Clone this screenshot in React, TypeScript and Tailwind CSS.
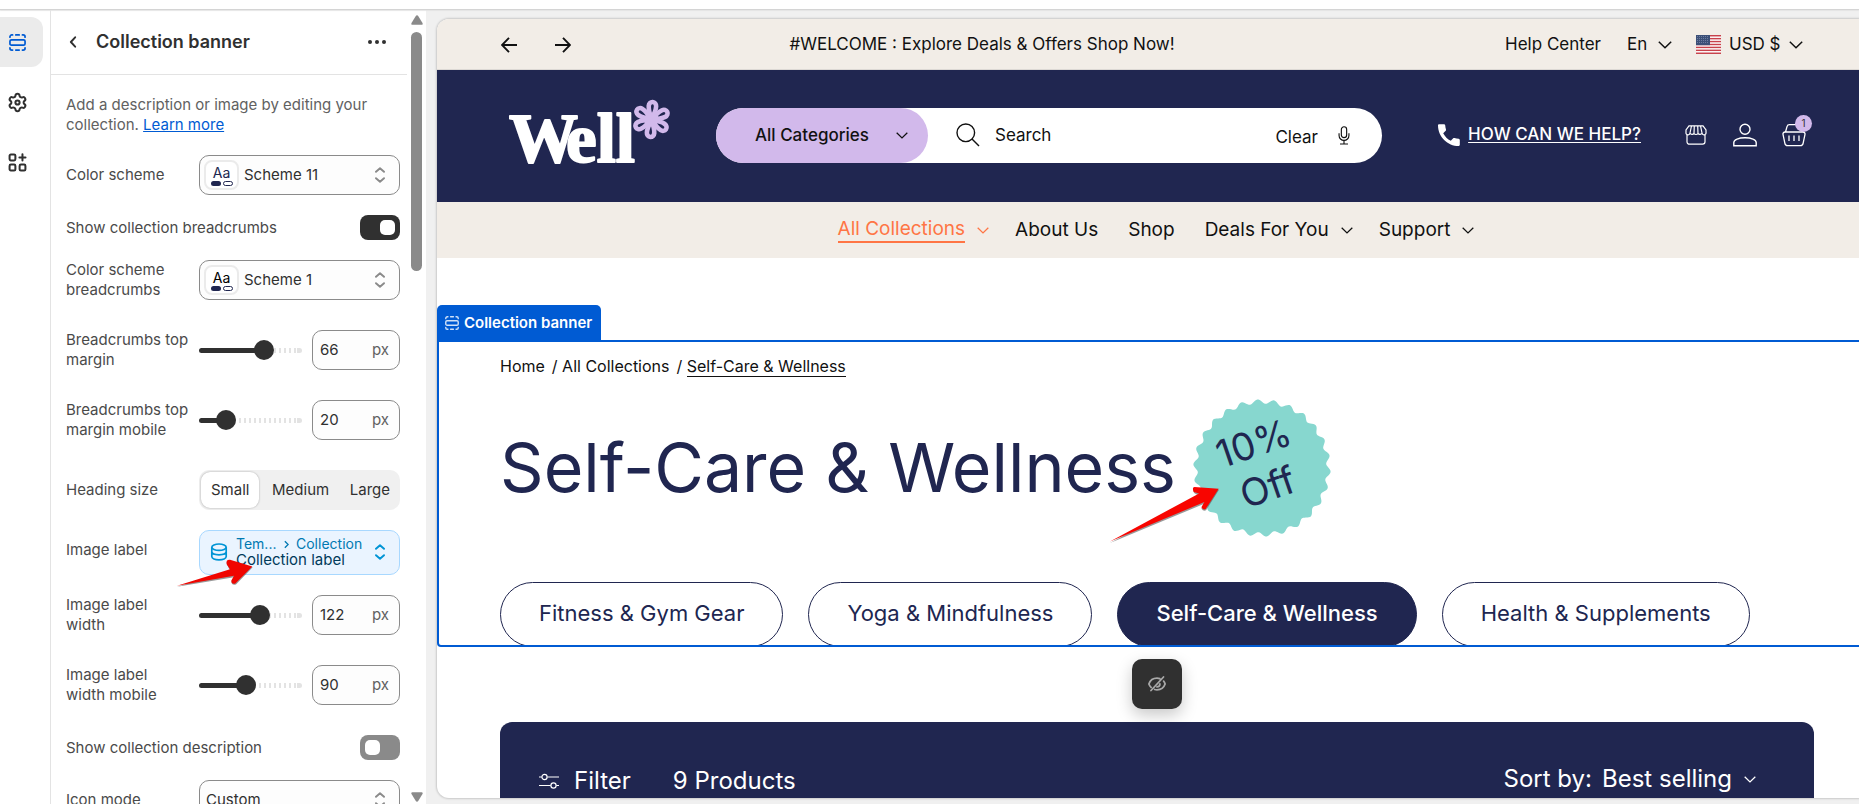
import React, { useId } from "react";

type IconProps = { className?: string };

function SectionIcon({ className }: IconProps) {
  return (
    <svg viewBox="0 0 18 18" className={className} fill="none" stroke="currentColor" strokeWidth="1.8" strokeLinecap="round" strokeLinejoin="round" aria-hidden="true">
      <rect x="1" y="6.2" width="16" height="5.6" rx="1.6" />
      <path d="M1 3.4V3a2 2 0 0 1 2-2h.8M7.2 1h3.6M14.2 1h.8a2 2 0 0 1 2 2v.4M1 14.6v.4a2 2 0 0 0 2 2h.8M7.2 17h3.6M14.2 17h.8a2 2 0 0 0 2-2v-.4" />
    </svg>
  );
}

function GearIcon({ className }: IconProps) {
  return (
    <svg viewBox="0 0 24 24" className={className} fill="none" stroke="currentColor" strokeWidth="2.3" strokeLinejoin="round" aria-hidden="true">
      <path d="M9.671 4.136a2.34 2.34 0 0 1 4.659 0 2.34 2.34 0 0 0 3.319 1.915 2.34 2.34 0 0 1 2.33 4.033 2.34 2.34 0 0 0 0 3.831 2.34 2.34 0 0 1-2.33 4.033 2.34 2.34 0 0 0-3.319 1.915 2.34 2.34 0 0 1-4.659 0 2.34 2.34 0 0 0-3.32-1.915 2.34 2.34 0 0 1-2.33-4.033 2.34 2.34 0 0 0 0-3.831A2.34 2.34 0 0 1 6.35 6.051a2.34 2.34 0 0 0 3.319-1.915" />
      <circle cx="12" cy="12" r="2.4" />
    </svg>
  );
}

function AppsIcon({ className }: IconProps) {
  return (
    <svg viewBox="0 0 18 18" className={className} fill="none" stroke="currentColor" strokeWidth="1.9" strokeLinecap="round" strokeLinejoin="round" aria-hidden="true">
      <rect x="1.5" y="1.5" width="5.5" height="5.5" rx="1.2" />
      <rect x="1.5" y="11" width="5.5" height="5.5" rx="1.2" />
      <rect x="11" y="11" width="5.5" height="5.5" rx="1.2" />
      <path d="M13.7 1.3v5.8M10.8 4.2h5.8" />
    </svg>
  );
}

function Chevron({ className }: IconProps) {
  return (
    <svg viewBox="0 0 14 8" className={className} fill="none" stroke="currentColor" strokeWidth="1.5" aria-hidden="true">
      <path d="M.8.8 7 6.8 13.2.8" />
    </svg>
  );
}

function UpDown({ className }: IconProps) {
  return (
    <svg viewBox="0 0 12 16" className={className} fill="none" stroke="currentColor" strokeWidth="1.9" strokeLinecap="round" strokeLinejoin="round" aria-hidden="true">
      <path d="M2 4.8 6 1.2l4 3.6M2 11.2l4 3.6 4-3.6" />
    </svg>
  );
}

function ArrowRight({ className }: IconProps) {
  return (
    <svg viewBox="0 0 16 16" className={className} fill="none" stroke="currentColor" strokeWidth="1.9" aria-hidden="true">
      <path d="M0 8h15M8 .8 15 8l-7 7.200" />
    </svg>
  );
}

function DatabaseIcon({ className }: IconProps) {
  return (
    <svg viewBox="0 0 18 18" className={className} fill="none" stroke="currentColor" strokeWidth="1.7" aria-hidden="true">
      <ellipse cx="9" cy="4.2" rx="7.2" ry="3.2" />
      <path d="M1.8 4.2v9.4c0 1.9 3.2 3.3 7.2 3.3s7.2-1.4 7.2-3.3V4.2M1.8 8.8c0 1.7 3.2 3 7.2 3s7.2-1.3 7.2-3" />
    </svg>
  );
}

const ROW = "grid grid-cols-[133px_1fr] items-center";

function SchemeRow({ label, value, ink, className }: { label: string; value: string; ink: string; className: string }) {
  const id = useId();
  return (
    <div className={`${ROW} ${className}`}>
      <label htmlFor={id} className="pr-[10px]">{label}</label>
      <div className="relative h-10">
        <select id={id} className="h-10 w-full appearance-none rounded-[10px] border border-[#8a8a8a] bg-[#fdfdfd] pl-11 text-[15px] text-[#303030]">
          <option>{value}</option>
        </select>
        <span className="pointer-events-none absolute top-[5px] left-[5px] flex h-[30px] w-[35px] flex-col items-center justify-center rounded-lg border-2 border-[#ebebeb] bg-white">
          <span className={`text-[14px] leading-[16px] ${ink}`}>Aa</span>
          <span className="flex gap-[2px]">
            <span className="h-[5px] w-[10px] rounded-sm bg-[#202650]" />
            <span className="h-[5px] w-[10px] rounded-sm border border-[#202650]" />
          </span>
        </span>
        <UpDown className="pointer-events-none absolute top-3 right-[14px] h-4 w-3 text-[#8a8a8a]" />
      </div>
    </div>
  );
}

function SliderRow({ label, value, max, className }: { label: string; value: number; max: number; className: string }) {
  const id = useId();
  const fill = Math.round(10 + (83 * value) / max);
  return (
    <div className={`${ROW} ${className}`}>
      <label htmlFor={id} className="pr-[10px]">{label}</label>
      <div className="flex items-center gap-[10px]">
        <input
          id={id}
          type="range"
          min={0}
          max={max}
          defaultValue={value}
          className="h-[5px] w-[103px] appearance-none rounded-full [&::-webkit-slider-thumb]:size-5 [&::-webkit-slider-thumb]:appearance-none [&::-webkit-slider-thumb]:rounded-full [&::-webkit-slider-thumb]:bg-[#303030]"
          style={{
            backgroundImage:
              "linear-gradient(#303030,#303030),linear-gradient(#e3e3e3,#e3e3e3),repeating-linear-gradient(90deg,#e3e3e3 0 2px,transparent 2px 5px)",
            backgroundSize: `${fill}px 100%,5px 100%,100% 100%`,
            backgroundPosition: "left,right,left",
            backgroundRepeat: "no-repeat",
          }}
        />
        <div className="flex h-10 min-w-0 flex-1 items-center justify-between rounded-[10px] border border-[#8a8a8a] bg-[#fdfdfd] pr-[10px] pl-[7px]">
          <input aria-label={`${label} value`} defaultValue={value} className="w-10 bg-transparent text-[15px] text-[#303030] outline-none" />
          <span className="text-[#616161]">px</span>
        </div>
      </div>
    </div>
  );
}

function ToggleRow({ label, on, className }: { label: string; on: boolean; className: string }) {
  const id = useId();
  return (
    <div className={`flex h-[25px] items-center justify-between ${className}`}>
      <label htmlFor={id}>{label}</label>
      <input
        id={id}
        type="checkbox"
        role="switch"
        defaultChecked={on}
        className="flex h-[25px] w-10 appearance-none items-center rounded-lg bg-[#8a8a8a] px-[5px] before:block before:size-[15px] before:rounded-[5px] before:bg-white before:content-[''] checked:justify-end checked:bg-[#303030]"
      />
    </div>
  );
}

function Sidebar() {
  return (
    <aside className="flex w-[375px] shrink-0 bg-white">
      <div className="min-w-0 flex-1 overflow-hidden">
        <header className="flex h-[66px] items-center border-b border-[#e3e3e3] pr-5 pl-[14px] text-[#303030]">
          <button aria-label="Back" className="flex size-5 items-center">
            <svg viewBox="0 0 8 14" className="ml-1 h-3 w-2" fill="none" stroke="currentColor" strokeWidth="2.2" strokeLinecap="round" strokeLinejoin="round"><path d="M6.500 1.500 1.500 7l5 5.500" /></svg>
          </button>
          <h1 className="ml-[11px] flex-1 text-[18px] font-semibold">Collection banner</h1>
          <button aria-label="More actions">
            <svg viewBox="0 0 20 6" className="h-[6px] w-5" fill="currentColor"><circle cx="3" cy="3" r="2" /><circle cx="10" cy="3" r="2" /><circle cx="17" cy="3" r="2" /></svg>
          </button>
        </header>
        <div className="pt-5 pr-[7px] pl-[15px] text-[15px] leading-5 text-[#4a4a4a]">
          <p className="text-[#616161]">
            Add a description or image by editing your collection. <a href="#learn" className="text-[#005bd3] underline">Learn more</a>
          </p>
          <SchemeRow className="mt-5" label="Color scheme" value="Scheme 11" ink="text-[#202650]" />
          <ToggleRow className="mt-5" label="Show collection breadcrumbs" on />
          <SchemeRow className="mt-5" label="Color scheme breadcrumbs" value="Scheme 1" ink="text-black" />
          <SliderRow className="mt-[30px]" label="Breadcrumbs top margin" value={66} max={100} />
          <SliderRow className="mt-[30px]" label="Breadcrumbs top margin mobile" value={20} max={100} />
          <div className={`${ROW} mt-[30px]`} role="radiogroup" aria-label="Heading size">
            <span>Heading size</span>
            <div className="flex h-10 justify-between rounded-[10px] bg-[#f0f0f0] p-[2px] text-[#303030]">
              {["Small", "Medium", "Large"].map((size) => (
                <label key={size} className="flex items-center rounded-[9px] px-2 has-checked:bg-white has-checked:px-[10px] has-checked:shadow-[0_0_2px_rgba(0,0,0,0.35)]">
                  <input type="radio" name="heading-size" defaultChecked={size === "Small"} className="sr-only" />
                  {size}
                </label>
              ))}
            </div>
          </div>
          <div className="mt-5 grid grid-cols-[133px_1fr]">
            <span className="pt-[10px]">Image label</span>
            <div className="relative">
              <button aria-label="Image label source" className="flex h-[45px] w-full items-center rounded-[10px] border border-[#a8d8ff] bg-[#eaf4ff] pr-[13px] pb-px pl-[10px] text-left text-[#00659c]">
                <DatabaseIcon className="mr-2 size-[18px] text-[#0094d5]" />
                <span className="flex-1">
                  <span className="flex items-center text-[14px] leading-4 text-[#0079b2]">
                    <span className="w-12">Tem...</span>
                    <svg viewBox="0 0 6 10" className="mr-[7px] h-[9px] w-[5px]" fill="none" stroke="currentColor" strokeWidth="1.6"><path d="m1 1 4 4-4 4" /></svg>
                    Collection
                  </span>
                  <span className="block text-[15px] leading-4 text-[#003a5a]">Collection label</span>
                </span>
                <UpDown className="h-4 w-3 text-[#0094d5]" />
              </button>
              <svg viewBox="525 85 240 95" className="pointer-events-none absolute top-[28px] -left-6 h-8 w-20 overflow-visible" aria-hidden="true">
                <path d="M531 171 690 122 682 106Q676 92 690 92L758 112 708 164Q695 168 694 156L702 142Z" fill="#555" opacity=".6" />
                <path d="M531 168 690 118 680 103Q677 89 690 90L757 110 706 161Q694 164 694 152L702 138Z" fill="#f00500" />
              </svg>
            </div>
          </div>
          <SliderRow className="mt-5" label="Image label width" value={122} max={200} />
          <SliderRow className="mt-[30px]" label="Image label width mobile" value={90} max={200} />
          <ToggleRow className="mt-[30px]" label="Show collection description" on={false} />
          <div className={`${ROW} mt-5`}>
            <label htmlFor="icon-mode">Icon mode</label>
            <div className="relative h-10">
              <select id="icon-mode" className="h-10 w-full appearance-none rounded-[10px] border border-[#8a8a8a] bg-[#fdfdfd] pl-[6px] text-[15px] text-[#303030]">
                <option>Custom</option>
              </select>
              <UpDown className="pointer-events-none absolute top-3 right-[14px] h-4 w-3 text-[#8a8a8a]" />
            </div>
          </div>
        </div>
      </div>
      <div className="flex w-[19px] flex-col items-center pt-[6px] pb-[2px]" aria-hidden="true">
        <svg viewBox="0 0 12 10" className="h-[10px] w-3" fill="#8a8a8a"><path d="M6 .3c.5 0 .9.2 1.2.6l4.3 7C12 8.8 11.6 9.7 10.7 9.7H1.3C.4 9.7 0 8.8.5 7.9l4.300-7C5.1.5 5.5.3 6 .3z" /></svg>
        <div className="mt-[7px] h-[239px] w-[11px] rounded-full bg-[#8a8a8a]" />
        <div className="flex-1" />
        <svg viewBox="0 0 12 10" className="h-[10px] w-3 rotate-180" fill="#8a8a8a"><path d="M6 .3c.5 0 .9.2 1.2.6l4.3 7C12 8.8 11.6 9.7 10.7 9.7H1.3C.4 9.7 0 8.8.5 7.9l4.300-7C5.1.5 5.5.3 6 .3z" /></svg>
      </div>
    </aside>
  );
}

function Logo() {
  return (
    <svg viewBox="0 0 162 64" className="h-16 w-[162px] overflow-visible" role="img" aria-label="Well">
      <text x="0" y="61" fontFamily="'Liberation Serif', serif" fontWeight="700" fontSize="69" fill="#fff" stroke="#fff" strokeWidth="2" strokeLinejoin="round">W<tspan x="57">ell</tspan></text>
      <g transform="translate(142.500 18.500)" fill="none" stroke="#d2b9eb" strokeWidth="4.600" strokeLinejoin="round">
        {[4, 64, 124, 184, 244, 304].map((a) => (
          <path key={a} transform={`rotate(${a})`} d="M0 -1C-2.500 -6 -3.700 -10 -3.700 -13.500A3.700 4 0 0 1 3.700 -13.500C3.700 -10 2.500 -6 0 -1Z" />
        ))}
      </g>
    </svg>
  );
}

function Flag() {
  return (
    <svg viewBox="0 0 25 19" className="h-[19px] w-[25px]" aria-hidden="true">
      <rect width="25" height="19" fill="#fff" />
      {[0, 1, 2, 3, 4, 5, 6].map((i) => (
        <rect key={i} y={i * 2.92} width="25" height="1.46" fill="#c8414b" />
      ))}
      <rect width="14" height="10.2" fill="#3c5078" />
      {[1.5, 3.5, 5.5, 7.5].map((y) => (
        <path key={y} d={`M1 ${y}h12`} stroke="#8291b4" strokeWidth=".7" strokeDasharray="1 1" />
      ))}
    </svg>
  );
}

function Announcement() {
  return (
    <div className="flex h-[51px] items-center border-b border-[#dcd8d4] bg-[#f2ede7] pt-px pr-14 pl-16 text-[17px] text-[#111]">
      <div className="flex gap-[38px]">
        <button aria-label="Previous"><ArrowRight className="size-4 rotate-180" /></button>
        <button aria-label="Next"><ArrowRight className="size-4" /></button>
      </div>
      <p className="flex-1 pr-28 text-center">#WELCOME : Explore Deals &amp; Offers Shop Now!</p>
      <div className="flex items-center">
        <a href="#help" className="mr-[26px] whitespace-nowrap">Help Center</a>
        <div className="relative mr-6 flex items-center">
          <select aria-label="Language" className="appearance-none pr-6"><option>En</option></select>
          <Chevron className="pointer-events-none absolute right-0 h-2 w-[14px]" />
        </div>
        <Flag />
        <div className="relative ml-2 flex items-center">
          <select aria-label="Currency" className="appearance-none pr-[22px]"><option>USD $</option></select>
          <Chevron className="pointer-events-none absolute right-0 h-2 w-[14px]" />
        </div>
      </div>
    </div>
  );
}

function StoreHeader() {
  return (
    <div className="flex h-[132px] items-center bg-[#202650] pr-[53px] pb-[2px] pl-[72px]">
      <a href="#home" className="-mt-1 mr-[45px]"><Logo /></a>
      <form className="flex h-[55px] w-[666px] items-center rounded-full bg-white text-[17px] text-[#111]">
        <div className="relative flex h-full w-[212px] shrink-0 items-center">
          <select aria-label="Category" className="h-full w-full appearance-none rounded-full bg-[#d2b9eb] pt-[2px] pl-[39px] font-medium">
            <option>All Categories</option>
          </select>
          <Chevron className="pointer-events-none absolute right-5 h-[7px] w-3" />
        </div>
        <svg viewBox="0 0 24 24" className="ml-7 size-6" fill="none" stroke="currentColor" strokeWidth="1.4" aria-hidden="true"><circle cx="9.8" cy="9.8" r="8.8" /><path d="m16 16 7 7" /></svg>
        <input aria-label="Search" placeholder="Search" className="ml-[15px] min-w-0 flex-1 pt-[2px] outline-none placeholder:text-[#111]" />
        <button type="button" className="mr-5 pt-[5px]">Clear</button>
        <button type="button" aria-label="Voice search" className="mr-8">
          <svg viewBox="0 0 12 20" className="h-[19px] w-3" fill="none" stroke="currentColor" strokeWidth="1.2"><rect x="3.2" y=".8" width="5.6" height="11.5" rx="2.8" /><path d="M.8 7.500V10a5.200 5.200 0 0 0 10.400 0V7.500M6 15.200v3.500M1.800 18.900h8.400" /></svg>
        </button>
      </form>
      <div className="ml-auto flex items-center text-white">
        <svg viewBox="0 0 22 22" className="mr-2 size-[22px]" fill="currentColor" aria-hidden="true"><path d="M1.200.2h4.800c.7 0 1.100.4 1.200 1.100.1 1.500.4 2.900.8 4.200.2.500.1.900-.3 1.300L5.200 9.200c1.700 3.300 4.300 5.900 7.600 7.600l2.400-2.500c.4-.4.8-.5 1.300-.3 1.300.4 2.700.7 4.200.8.700.1 1.100.5 1.100 1.200v4.800c0 .7-.4 1.200-1.100 1.200C9.600 22 0 12.500 0 1.400 0 .7.500.2 1.200.2z" /></svg>
        <a href="#contact" className="mr-[44px] text-[17px] font-medium whitespace-nowrap underline underline-offset-2">HOW CAN WE HELP?</a>
        <button aria-label="Store" className="mr-[26px]">
          <svg viewBox="0 0 22 20" className="h-5 w-[22px]" fill="none" stroke="currentColor" strokeWidth="1.2"><path d="M4 .8h14L21 5v2.300a1.900 1.900 0 0 1-4 .9 2.500 2.500 0 0 1-4 .3 2.500 2.500 0 0 1-4 0 2.500 2.500 0 0 1-4-.3 1.900 1.900 0 0 1-4-.9V5zM6.500.8 5 8M9.300.8 9 8.500M12.700.8l.3 7.700M15.500.8 17 8M2 9.500v7.300A2.400 2.400 0 0 0 4.400 19.200h13.200a2.400 2.400 0 0 0 2.400-2.400V9.500" /></svg>
        </button>
        <button aria-label="Account" className="mr-[25px]">
          <svg viewBox="0 0 24 24" className="size-6" fill="none" stroke="currentColor" strokeWidth="1.4"><circle cx="12" cy="6.3" r="5" /><path d="M.8 22.800v-3.200c0-3 5-4.800 11.200-4.800s11.200 1.800 11.200 4.800v3.200z" /></svg>
        </button>
        <button aria-label="Cart, 1 item" className="relative">
          <svg viewBox="0 0 24 24" className="size-6" fill="none" stroke="currentColor" strokeWidth="1.3"><path d="M3.500 9 5 3.600A2.600 2.600 0 0 1 7.500 1.700h9A2.600 2.600 0 0 1 19 3.600L20.500 9M3 9h18a2 2 0 0 1 2 2.400l-1.900 9a2.800 2.800 0 0 1-2.700 2.300H5.600a2.800 2.800 0 0 1-2.700-2.300l-1.900-9A2 2 0 0 1 3 9zM7 12.500v5.500M12 12.500v5.500M17 12.500v5.500" /></svg>
          <span className="absolute -top-2 -right-[6px] flex size-[17px] items-center justify-center rounded-full bg-[#d2b9eb] text-[10px] text-[#333]">1</span>
        </button>
      </div>
    </div>
  );
}

function NavBar() {
  return (
    <nav className="flex h-14 items-center justify-center bg-[#f2ede7] pl-4 text-[19px] text-[#111]">
      <button className="mr-[26px] flex items-center gap-3 text-[#ff7545]">
        <span className="border-b-2 border-[#ff7545] leading-6">All Collections</span>
        <Chevron className="h-[7px] w-3" />
      </button>
      <a href="#about" className="mr-[30px]">About Us</a>
      <a href="#shop" className="mr-[30px]">Shop</a>
      <button className="mr-[26px] flex items-center gap-3">Deals For You <Chevron className="h-[7px] w-3" /></button>
      <button className="flex items-center gap-3">Support <Chevron className="h-[7px] w-3" /></button>
    </nav>
  );
}

function sealPath(points: number, radius: number, depth: number): string {
  const steps = 364;
  const out: string[] = [];
  for (let i = 0; i < steps; i++) {
    const a = (i / steps) * Math.PI * 2;
    const r = radius + depth * Math.cos(points * (a + 0.065));
    out.push(`${(70 + r * Math.sin(a)).toFixed(2)} ${(70 - r * Math.cos(a)).toFixed(2)}`);
  }
  return `M${out.join("L")}Z`;
}

function DiscountSeal() {
  return (
    <svg viewBox="0 0 140 140" className="size-[140px] shrink-0" role="img" aria-label="10% Off">
      <path d={sealPath(26, 66.5, 2.2)} fill="#87d7cf" />
      <g fontFamily="Inter, sans-serif" fontSize="38" fill="#202650" textAnchor="middle">
        <text transform="translate(66 58) rotate(-19)">10%</text>
        <text transform="translate(80 102) rotate(-19)">Off</text>
      </g>
    </svg>
  );
}

const COLLECTIONS = ["Fitness & Gym Gear", "Yoga & Mindfulness", "Self-Care & Wellness", "Health & Supplements"];

function CollectionBanner() {
  return (
    <section className="mt-[47px]">
      <div className="flex h-9 w-[164px] items-center gap-[5px] rounded-t-[5px] bg-[#005bd3] pl-2 text-[15px] font-semibold whitespace-nowrap text-white">
        <SectionIcon className="size-[14px] shrink-0 text-[#d0e2f8]" />
        Collection banner
      </div>
      <div className="relative -mt-px h-[307px] overflow-hidden pt-4 pr-[45px] pl-[63px]">
        <div className="pointer-events-none absolute inset-y-0 left-0 -right-1 z-10 rounded-bl-sm border-2 border-[#005bd3]" />
        <nav className="flex h-5 gap-[7px] text-base leading-5 text-[#111]" aria-label="Breadcrumb">
          <a href="#home">Home</a>
          <span>/ <a href="#collections">All Collections</a></span>
          <span>/ <a href="#self-care" className="border-b border-[#111]">Self-Care &amp; Wellness</a></span>
        </nav>
        <div className="mt-[22px] flex h-[140px] items-center gap-4">
          <h2 className="pb-[2px] text-[68px] leading-none whitespace-nowrap text-[#202650]">Self-Care &amp; Wellness</h2>
          <div className="relative">
            <DiscountSeal />
            <svg viewBox="90 345 340 180" className="pointer-events-none absolute top-[87px] -left-[84px] h-[60px] w-[113px] overflow-visible" aria-hidden="true">
              <path d="M96 519 362 376 349 369Q343 354 351 353L424 359 385 421Q377 425 371 416L378 402Z" fill="#555" opacity=".6" />
              <path d="M96 515 364 370 348 366Q342 351 350 351L423 356 384 417Q376 421 371 412L380 396Z" fill="#f80500" />
            </svg>
          </div>
        </div>
        <div className="mt-[44px] flex gap-[25px]">
          {COLLECTIONS.map((name) =>
            name === "Self-Care & Wellness" ? (
              <a key={name} href="#collection" aria-current="page" className="flex h-[65px] items-center rounded-full border border-[#202650] bg-[#202650] px-[38px] pb-[2px] text-[22px] font-medium whitespace-nowrap text-white">{name}</a>
            ) : (
              <a key={name} href="#collection" className="flex h-[65px] items-center rounded-full border border-[#202650] px-[38px] pb-[2px] text-[22px] whitespace-nowrap text-[#202650]">{name}</a>
            ),
          )}
        </div>
      </div>
    </section>
  );
}

function ProductToolbar() {
  return (
    <section className="relative pt-[75px] pr-[45px] pl-[63px]">
      <button aria-label="Hide section" className="absolute top-3 left-[695px] flex size-[50px] items-center justify-center rounded-[10px] bg-[#303030] text-[#a8a8a8] shadow-[0_6px_16px_rgba(0,0,0,0.22)]">
        <svg viewBox="0 0 20 20" className="size-5" fill="none" stroke="currentColor" strokeWidth="1.8" strokeLinecap="round"><path d="M16.500 3 4 16.500M12.800 4.700A8.500 8.500 0 0 0 10 4.200C6 4.200 3 6.800 1.900 10c.5 1.300 1.200 2.400 2.200 3.400M16.600 7.200c.7.800 1.200 1.800 1.500 2.800C17 13.200 14 15.800 10 15.800c-.8 0-1.600-.1-2.300-.3M12.900 10a2.900 2.900 0 0 1-2.900 2.900" /></svg>
      </button>
      <div className="flex h-[118px] items-center rounded-t-xl bg-[#202650] pr-[58px] pl-[39px] text-[24px] text-white">
        <button className="mr-[42px] flex items-center gap-[15px]">
          <svg viewBox="0 0 20 16" className="h-4 w-5" fill="none" stroke="currentColor" strokeWidth="1.2" aria-hidden="true"><path d="M0 4h2.700M8.300 4H20M0 12.500h11.700M17.300 12.500H20" /><circle cx="5.5" cy="4" r="2.6" /><circle cx="14.5" cy="12.5" r="2.6" /></svg>
          Filter
        </button>
        <span className="flex-1">9 Products</span>
        <label htmlFor="sort" className="mr-[10px] pb-1">Sort by:</label>
        <div className="relative flex items-center pb-1">
          <select id="sort" className="appearance-none pr-6"><option>Best selling</option></select>
          <Chevron className="pointer-events-none absolute right-0 h-[7px] w-3" />
        </div>
      </div>
    </section>
  );
}

export default function App() {
  return (
    <div className="flex h-screen flex-col overflow-hidden bg-white font-['Inter',sans-serif]">
      <div className="h-[9px] shrink-0" />
      <div className="relative flex min-h-0 flex-1 bg-[#f0f0f0]">
        <div className="pointer-events-none absolute inset-x-0 top-0 z-20 h-px bg-[#d4d4d4] shadow-[0_1px_1px_#e3e3e3]" />
        <nav aria-label="Editor" className="flex w-[51px] shrink-0 flex-col border-r border-[#e3e3e3] bg-white pt-2 text-[#303030]">
          <button aria-label="Sections" className="flex h-[50px] w-[43px] items-center rounded-r-xl bg-[#ebebeb] pl-[9px] text-[#005bd3]"><SectionIcon className="size-[17px]" /></button>
          <button aria-label="Theme settings" className="mt-[10px] flex h-[50px] items-center pl-[7px]"><GearIcon className="size-[21px]" /></button>
          <button aria-label="App embeds" className="mt-[10px] flex h-[50px] items-center pl-2"><AppsIcon className="size-[19px]" /></button>
        </nav>
        <Sidebar />
        <main className="mt-[10px] mb-[6px] ml-[11px] min-w-0 flex-1 overflow-hidden rounded-l-xl bg-white shadow-[0_0_2px_1px_rgba(0,0,0,0.16)]">
          <Announcement />
          <StoreHeader />
          <NavBar />
          <CollectionBanner />
          <ProductToolbar />
        </main>
      </div>
    </div>
  );
}
